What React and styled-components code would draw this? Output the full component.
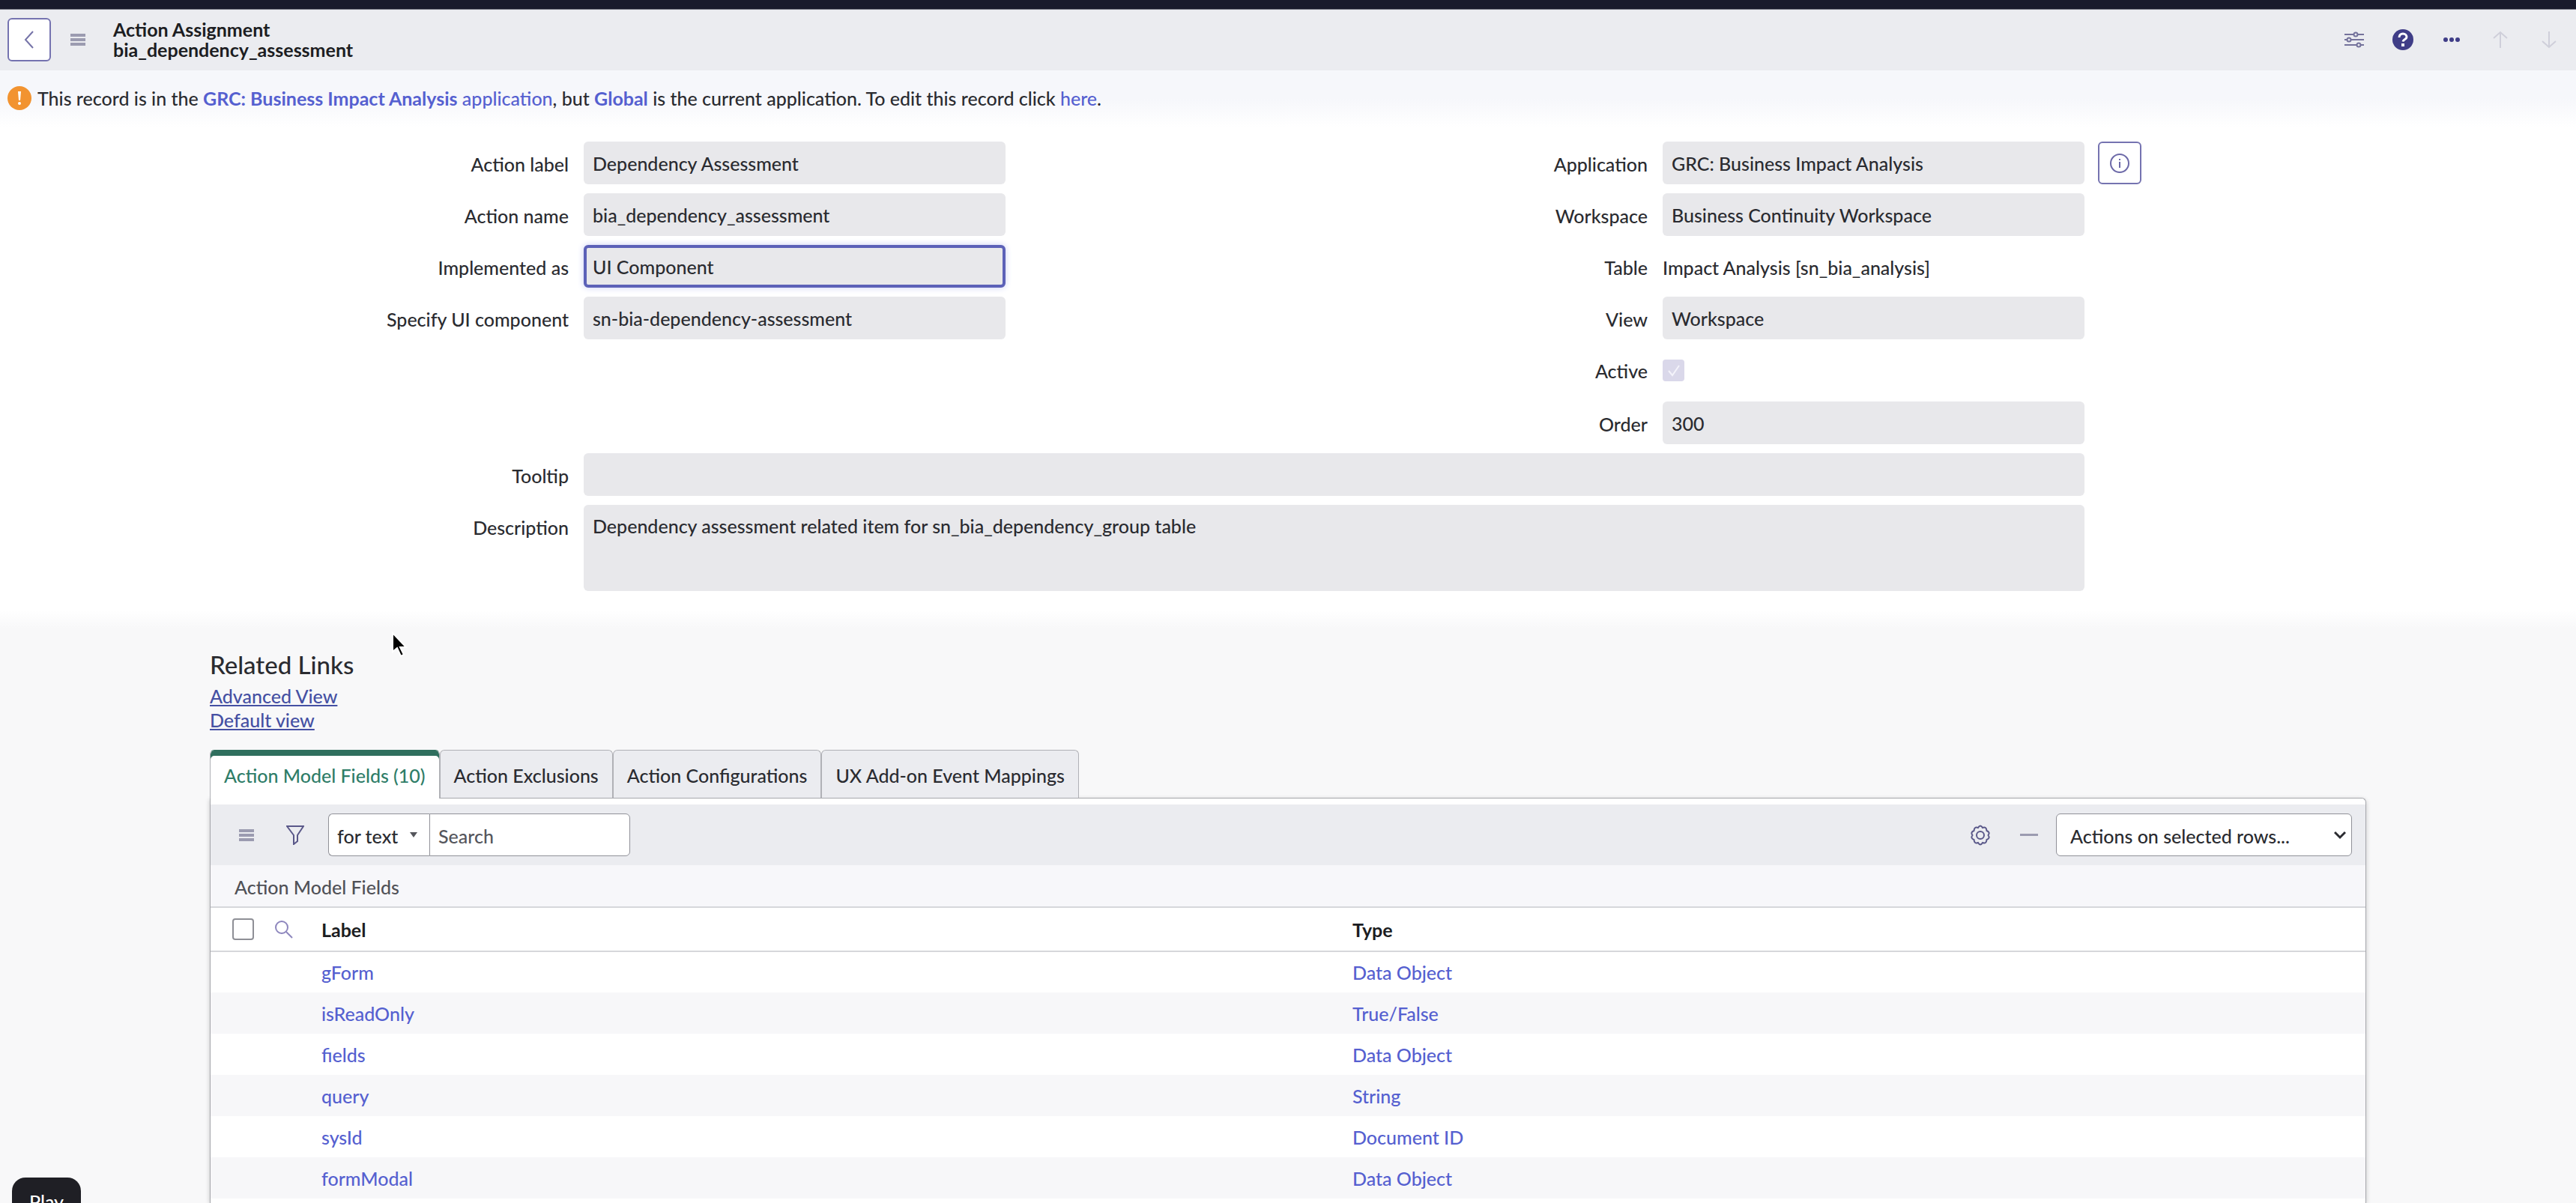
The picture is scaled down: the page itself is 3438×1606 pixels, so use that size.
import styled, { createGlobalStyle } from "styled-components";
import { useState } from "react";

const leftFields = [
  { id: "label", label: "Action label", value: "Dependency Assessment" },
  { id: "name", label: "Action name", value: "bia_dependency_assessment" },
  { id: "implemented", label: "Implemented as", value: "UI Component", focused: true },
  { id: "component", label: "Specify UI component", value: "sn-bia-dependency-assessment" }
];

const tabs = [
  "Action Model Fields (10)",
  "Action Exclusions",
  "Action Configurations",
  "UX Add-on Event Mappings"
];

const rows = [
  { label: "gForm", type: "Data Object" },
  { label: "isReadOnly", type: "True/False" },
  { label: "fields", type: "Data Object" },
  { label: "query", type: "String" },
  { label: "sysId", type: "Document ID" },
  { label: "formModal", type: "Data Object" }
];

const MenuIcon = () => (
  <svg width="20" height="16" viewBox="0 0 20 16" fill="#9b9bb0">
    <rect y="0" width="20" height="4" />
    <rect y="6" width="20" height="4" />
    <rect y="12" width="20" height="4" />
  </svg>
);

const BackIcon = () => (
  <svg width="16" height="24" viewBox="0 0 16 24" fill="none" stroke="#7573a8" strokeWidth="2">
    <path d="M13 1 3 12l10 11" />
  </svg>
);

const WarningIcon = () => (
  <svg width="32" height="32" viewBox="0 0 32 32">
    <circle cx="16" cy="16" r="16" fill="#f29330" />
    <path d="M14 7h4l-1 12h-2z" fill="#fff" />
    <circle cx="16" cy="23" r="2" fill="#fff" />
  </svg>
);

const SlidersIcon = () => (
  <svg width="26" height="24" viewBox="0 0 26 24" fill="#ebecf0" stroke="#74729b" strokeWidth="2">
    <path d="M0 5h26M0 12h26M0 19h26" />
    <circle cx="15" cy="5" r="2.5" />
    <circle cx="6" cy="12" r="2.5" />
    <circle cx="19" cy="19" r="2.5" />
  </svg>
);

const HelpIcon = () => (
  <svg width="28" height="28" viewBox="0 0 28 28">
    <circle cx="14" cy="14" r="14" fill="#3f3d87" />
    <path
      d="M9 11c0-3 2-5 5-5s5 2 5 4.500c0 3-4.500 3-5 6"
      fill="none"
      stroke="#fff"
      strokeWidth="3"
    />
    <rect x="12" y="19" width="4" height="4" fill="#fff" />
  </svg>
);

const MoreIcon = () => (
  <svg width="22" height="6" viewBox="0 0 22 6" fill="#3f3d87">
    <circle cx="3" cy="3" r="3" />
    <circle cx="11" cy="3" r="3" />
    <circle cx="19" cy="3" r="3" />
  </svg>
);

const ArrowIcon = ({ down }) => (
  <svg width="20" height="24" viewBox="0 0 20 24" fill="none" stroke="#cfcfda" strokeWidth="2">
    <path d={down ? "M10 1v21M1 14l9 8 9-8" : "M10 23V2M1 10l9-8 9 8"} />
  </svg>
);

const InfoIcon = () => (
  <svg width="26" height="26" viewBox="0 0 26 26" fill="none" stroke="#6c69a8" strokeWidth="2">
    <circle cx="13" cy="13" r="12" />
    <path d="M13 11v8M13 7v2" />
  </svg>
);

const FilterIcon = () => (
  <svg width="24" height="26" viewBox="0 0 24 26" fill="none" stroke="#5a5889" strokeWidth="2">
    <path d="M1 1h22l-8 12v8l-5 4V13z" />
  </svg>
);

const GearIcon = () => (
  <svg width="26" height="28" viewBox="0 0 26 28" fill="none" stroke="#5a5889" strokeWidth="2">
    <path d="M10 4q3-5 6 0 5-2 5.500 4 5 2 2 6 3 4-2 6-.5 6-5.500 4-3 5-6 0-5 2-5.500-4-5-2-2-6-3-4 2-6Q5 2 10 4z" />
    <circle cx="13" cy="14" r="5" />
  </svg>
);

const SearchIcon = () => (
  <svg width="24" height="24" viewBox="0 0 24 24" fill="none" stroke="#8d86bd" strokeWidth="2">
    <circle cx="9" cy="9" r="8" />
    <path d="m15 15 8 8" />
  </svg>
);

const Cursor = () => (
  <CursorSvg width="24" height="36" viewBox="0 0 24 36">
    <path d="M2 2v25l6-5 5 11 4-2-5-10h8z" fill="#000" stroke="#fff" strokeWidth="2" />
  </CursorSvg>
);

const Field = ({ id, label, value, focused, children }) => (
  <FieldRow>
    <FieldLabel htmlFor={id}>{label}</FieldLabel>
    <FieldInput id={id} defaultValue={value} readOnly $focused={focused} />
    {children}
  </FieldRow>
);

const App = () => {
  const [activeTab, setActiveTab] = useState(tabs[0]);

  return (
    <Page>
      <GlobalStyle />
      <TopStrip />
      <Header>
        <OutlineButton aria-label="Back">
          <BackIcon />
        </OutlineButton>
        <IconButton aria-label="Record menu">
          <MenuIcon />
        </IconButton>
        <Title>
          Action Assignment
          <br />
          bia_dependency_assessment
        </Title>
        <HeaderActions>
          <IconButton aria-label="Personalize form">
            <SlidersIcon />
          </IconButton>
          <IconButton aria-label="Help">
            <HelpIcon />
          </IconButton>
          <IconButton aria-label="More options">
            <MoreIcon />
          </IconButton>
          <IconButton aria-label="Previous record" disabled>
            <ArrowIcon />
          </IconButton>
          <IconButton aria-label="Next record" disabled>
            <ArrowIcon down />
          </IconButton>
        </HeaderActions>
      </Header>

      <Notice>
        <WarningIcon />
        <p>
          This record is in the{" "}
          <a href="#application">
            <b>GRC: Business Impact Analysis</b> application
          </a>
          , but{" "}
          <a href="#global">
            <b>Global</b>
          </a>{" "}
          is the current application. To edit this record click <a href="#edit">here</a>.
        </p>
      </Notice>

      <FormArea>
        <Form>
          <Columns>
            <FieldStack>
              {leftFields.map((field) => (
                <Field key={field.id} {...field} />
              ))}
            </FieldStack>
            <FieldStack>
              <Field id="application" label="Application" value="GRC: Business Impact Analysis">
                <OutlineButton type="button" aria-label="Preview application">
                  <InfoIcon />
                </OutlineButton>
              </Field>
              <Field id="workspace" label="Workspace" value="Business Continuity Workspace" />
              <FieldRow>
                <FieldLabel as="span">Table</FieldLabel>
                <FieldText>Impact Analysis [sn_bia_analysis]</FieldText>
              </FieldRow>
              <Field id="view" label="View" value="Workspace" />
              <FieldRow>
                <FieldLabel htmlFor="active">Active</FieldLabel>
                <CheckHolder>
                  <CheckBox id="active" type="checkbox" defaultChecked disabled />
                  <CheckMark width="18" height="16" viewBox="0 0 18 16">
                    <path d="m2 8 5 6L16 1" fill="none" stroke="#f4f3fa" strokeWidth="2" />
                  </CheckMark>
                </CheckHolder>
              </FieldRow>
              <Field id="order" label="Order" value="300" />
            </FieldStack>
          </Columns>
          <FieldRow $wide>
            <FieldLabel htmlFor="tooltip">Tooltip</FieldLabel>
            <FieldInput id="tooltip" readOnly />
          </FieldRow>
          <FieldRow $wide>
            <FieldLabel htmlFor="description">Description</FieldLabel>
            <FieldArea
              id="description"
              readOnly
              defaultValue="Dependency assessment related item for sn_bia_dependency_group table"
            />
          </FieldRow>
        </Form>
      </FormArea>

      <Related>
        <RelatedTitle>Related Links</RelatedTitle>
        <RelatedLink href="#advanced">Advanced View</RelatedLink>
        <RelatedLink href="#default">Default view</RelatedLink>
        <Cursor />

        <TabBar role="tablist">
          {tabs.map((tab) => (
            <Tab
              key={tab}
              role="tab"
              aria-selected={tab === activeTab}
              $active={tab === activeTab}
              onClick={() => setActiveTab(tab)}
            >
              {tab}
            </Tab>
          ))}
        </TabBar>

        <ListPanel>
          <Toolbar>
            <IconButton aria-label="List menu">
              <MenuIcon />
            </IconButton>
            <IconButton aria-label="Filter">
              <FilterIcon />
            </IconButton>
            <SearchGroup>
              <SelectHolder>
                <SearchType aria-label="Search field">
                  <option>for text</option>
                </SearchType>
                <SelectArrow width="10" height="7" viewBox="0 0 10 7" $right="16px">
                  <path d="M0 0h10L5 7z" fill="#55565c" />
                </SelectArrow>
              </SelectHolder>
              <SearchInput aria-label="Search" placeholder="Search" />
            </SearchGroup>
            <ToolbarEnd>
              <IconButton aria-label="List settings">
                <GearIcon />
              </IconButton>
              <IconButton aria-label="Collapse list">
                <Dash />
              </IconButton>
              <SelectHolder>
                <ActionSelect aria-label="Actions">
                  <option>Actions on selected rows...</option>
                </ActionSelect>
                <SelectArrow width="16" height="12" viewBox="0 0 16 12" $right="8px">
                  <path d="m1 2 7 7 7-7" fill="none" stroke="#2a2b30" strokeWidth="3" />
                </SelectArrow>
              </SelectHolder>
            </ToolbarEnd>
          </Toolbar>
          <Table>
            <caption>Action Model Fields</caption>
            <thead>
              <tr>
                <CheckCell>
                  <HeadTools>
                    <CheckBox type="checkbox" aria-label="Select all rows" />
                    <IconButton aria-label="Search columns">
                      <SearchIcon />
                    </IconButton>
                  </HeadTools>
                </CheckCell>
                <LabelHead>Label</LabelHead>
                <th>Type</th>
              </tr>
            </thead>
            <tbody>
              {rows.map(({ label, type }) => (
                <tr key={label}>
                  <td />
                  <td>
                    <a href={`#${label}`}>{label}</a>
                  </td>
                  <td>
                    <a href={`#${label}-type`}>{type}</a>
                  </td>
                </tr>
              ))}
            </tbody>
          </Table>
        </ListPanel>
      </Related>
      <PlayButton>Play</PlayButton>
    </Page>
  );
};

const GlobalStyle = createGlobalStyle`
  * {
    box-sizing: border-box;
  }

  body {
    margin: 0;
    background: #f8f8f9;
    color: #2a2b30;
    font-family: Lato, sans-serif;
    font-size: 25px;
    font-weight: 500;
    line-height: 32px;
  }

  button,
  input,
  select,
  textarea {
    font: inherit;
    color: inherit;
  }

  a {
    color: #5560d0;
    text-decoration: none;
  }

  svg {
    display: block;
    flex: none;
  }
`;

const Page = styled.div`
  display: flex;
  flex-direction: column;
  height: 100vh;
  overflow: hidden;
`;

const TopStrip = styled.div`
  flex: none;
  height: 13px;
  background: #191a2b;
  border-bottom: 1px solid #7b7c86;
`;

const Header = styled.header`
  flex: none;
  display: flex;
  align-items: center;
  gap: 3px;
  height: 81px;
  padding: 0 10px 2px;
  background: #ebecf0;
`;

const OutlineButton = styled.button`
  display: flex;
  align-items: center;
  justify-content: center;
  width: 58px;
  height: 58px;
  padding: 0;
  border: 2px solid #7573b0;
  border-radius: 6px;
  background: #fff;
  cursor: pointer;
`;

const IconButton = styled.button`
  display: flex;
  align-items: center;
  justify-content: center;
  width: 65px;
  height: 58px;
  padding: 0;
  border: none;
  background: none;
  cursor: pointer;
`;

const Title = styled.h1`
  margin: 0 0 0 12px;
  color: #1c1d22;
  font-size: 25px;
  line-height: 27px;
`;

const HeaderActions = styled.div`
  display: flex;
  margin-left: auto;
  margin-right: -6px;
`;

const Notice = styled.div`
  flex: none;
  display: flex;
  align-items: center;
  gap: 8px;
  height: 76px;
  padding: 0 10px 2px;
  background: linear-gradient(#f6f7fb 50%, #fff);

  p {
    margin: 0;
  }
`;

const FormArea = styled.section`
  flex: none;
  padding: 19px 0 50px;
  background: linear-gradient(#fff calc(100% - 24px), #f8f8f9);
`;

const Form = styled.form`
  display: flex;
  flex-direction: column;
  gap: 12px;
  max-width: 2880px;
  margin: 0 auto;
`;

const Columns = styled.div`
  display: grid;
  grid-template-columns: 1fr 1fr;
`;

const FieldStack = styled.div`
  display: flex;
  flex-direction: column;
  gap: 12px;
`;

const FieldRow = styled.div`
  display: grid;
  grid-template-columns: ${({ $wide }) => ($wide ? "500fr 2003fr 377fr" : "500fr 563fr 377fr")};
  align-items: start;
  min-height: 57px;

  ${OutlineButton} {
    height: 57px;
    margin-left: 18px;
  }
`;

const FieldLabel = styled.label`
  padding: 14px 20px 11px 0;
  text-align: right;
`;

const FieldInput = styled.input`
  min-width: 0;
  height: 57px;
  padding: 1px ${({ $focused }) => ($focused ? "8px" : "12px")} 0;
  border: ${({ $focused }) => ($focused ? "4px solid #5c61b8" : "none")};
  border-radius: 6px;
  background: #e8e8eb;
  box-shadow: ${({ $focused }) => ($focused ? "0 0 8px #c9cdf5" : "none")};
  outline: none;
`;

const FieldArea = styled.textarea`
  height: 115px;
  padding: 12px;
  border: none;
  border-radius: 6px;
  background: #e8e8eb;
  outline: none;
  resize: none;
`;

const FieldText = styled.span`
  padding: 14px 0 11px;
`;

const CheckHolder = styled.div`
  position: relative;
  display: flex;
  align-items: center;
  height: 59px;
`;

const CheckBox = styled.input`
  appearance: none;
  width: 29px;
  height: 29px;
  margin: 0;
  border: 2px solid #8e8f96;
  border-radius: 4px;
  background: #fff;

  &:disabled {
    border-color: #dad8ea;
    background: #dad8ea;
  }
`;

const CheckMark = styled.svg`
  position: absolute;
  left: 6px;
`;

const Related = styled.section`
  position: relative;
  flex: 1 0 auto;
  display: flex;
  flex-direction: column;
  align-items: flex-start;
  width: 100%;
  max-width: 2878px;
  margin: 0 auto;
`;

const RelatedTitle = styled.h2`
  margin: 28px 0 6px;
  font-size: 33px;
  font-weight: 500;
  line-height: 40px;
`;

const RelatedLink = styled.a`
  color: #4550a3;
  text-decoration: underline;
`;

const CursorSvg = styled.svg`
  position: absolute;
  top: 4px;
  left: 242px;
`;

const TabBar = styled.div`
  display: flex;
  margin-top: 24px;
`;

const Tab = styled.button`
  position: relative;
  z-index: ${({ $active }) => ($active ? 1 : 0)};
  height: ${({ $active }) => ($active ? "65px" : "64px")};
  margin-bottom: ${({ $active }) => ($active ? "-1px" : "0")};
  padding: 2px 18px 0;
  border: 1px solid #b0b1b6;
  border-bottom: none;
  border-top-color: ${({ $active }) => ($active ? "#2f6f5e" : "#b0b1b6")};
  border-radius: 6px 6px 0 0;
  background: ${({ $active }) => ($active ? "#fff" : "#ebecf0")};
  box-shadow: ${({ $active }) => ($active ? "inset 0 7px #2f6f5e" : "none")};
  color: ${({ $active }) => ($active ? "#2f7d68" : "#2a2b30")};
  cursor: pointer;
`;

const ListPanel = styled.div`
  flex: 1;
  width: 100%;
  padding-top: 8px;
  border: 1px solid #a6a7ac;
  border-bottom: none;
  border-radius: 0 6px 0 0;
  background: #fff;
  box-shadow: 0 2px 6px rgba(0, 0, 0, 0.2);
`;

const Toolbar = styled.div`
  display: flex;
  align-items: center;
  height: 81px;
  padding: 0 18px 0 15px;
  background: #ebecf0;
`;

const SearchGroup = styled.div`
  display: flex;
  margin-left: 12px;
`;

const SelectHolder = styled.div`
  position: relative;
  display: flex;
  align-items: center;
`;

const SelectArrow = styled.svg`
  position: absolute;
  right: ${({ $right }) => $right};
  pointer-events: none;
`;

const SearchType = styled.select`
  appearance: none;
  width: 135px;
  height: 57px;
  padding: 2px 11px 0;
  border: 1px solid #909198;
  border-right: none;
  border-radius: 6px 0 0 6px;
  background: #fff;
`;

const SearchInput = styled.input`
  width: 268px;
  height: 57px;
  padding: 2px 11px 0;
  border: 1px solid #909198;
  border-radius: 0 6px 6px 0;
  background: #fff;

  &::placeholder {
    color: #55565c;
    opacity: 1;
  }
`;

const ToolbarEnd = styled.div`
  display: flex;
  align-items: center;
  margin-left: auto;

  ${SelectHolder} {
    margin-left: 4px;
  }
`;

const Dash = styled.span`
  width: 24px;
  height: 3px;
  background: #9b9bb0;
`;

const ActionSelect = styled.select`
  appearance: none;
  width: 395px;
  height: 57px;
  padding: 2px 18px 0;
  border: 1px solid #909198;
  border-radius: 6px;
  background: #fff;
`;

const Table = styled.table`
  width: 100%;
  border-collapse: collapse;
  table-layout: fixed;

  caption {
    height: 57px;
    padding: 13px 32px;
    border-bottom: 2px solid #d6d7db;
    background: #f7f7fa;
    color: #505157;
    text-align: left;
  }

  th,
  td {
    height: 55px;
    padding: 0;
    text-align: left;
  }

  th {
    height: 58px;
    border-bottom: 2px solid #d6d7db;
    color: #1c1d22;
  }

  tbody tr:nth-child(even) {
    background: #f7f7f9;
  }
`;

const CheckCell = styled.th`
  width: 148px;
`;

const LabelHead = styled.th`
  width: 1376px;
`;

const HeadTools = styled.div`
  display: flex;
  align-items: center;
  padding-left: 29px;

  ${IconButton} {
    width: 80px;
    height: 54px;
  }
`;

const PlayButton = styled.button`
  position: fixed;
  bottom: -30px;
  left: 16px;
  width: 92px;
  height: 64px;
  border: none;
  border-radius: 18px;
  background: #1f1f25;
  color: #fff;
`;

export default App;
